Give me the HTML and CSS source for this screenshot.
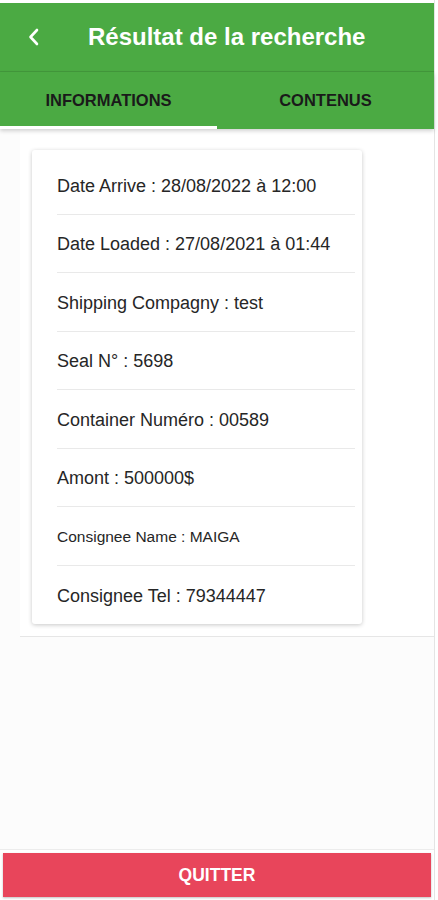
FILE: index.html
```html
<!DOCTYPE html>
<html lang="fr">
<head>
  <meta charset="UTF-8">
  <meta name="viewport" content="width=device-width, initial-scale=1.0">
  <title>Résultat de la recherche</title>
  <link rel="stylesheet" href="styles.css">
</head>
<body>

  <div class="app">
    <header class="topbar">
      <button class="back-btn" aria-label="Retour">
        <svg width="14" height="20" viewBox="0 0 14 20">
          <path d="M10 3 L3.5 10 L10 17" fill="none" stroke="#fff" stroke-width="2.6" stroke-linecap="round" stroke-linejoin="round"/>
        </svg>
      </button>
      <h1 class="title">Résultat de la recherche</h1>
    </header>

    <nav class="tabs">
      <div class="tab active">INFORMATIONS</div>
      <div class="tab">CONTENUS</div>
    </nav>

    <main class="main">
      <section class="content">
        <div class="card">
          <div class="row">Date Arrive : 28/08/2022 à 12:00</div>
          <div class="row">Date Loaded : 27/08/2021 à 01:44</div>
          <div class="row">Shipping Compagny : test</div>
          <div class="row">Seal N° : 5698</div>
          <div class="row">Container Numéro : 00589</div>
          <div class="row">Amont : 500000$</div>
          <div class="row small">Consignee Name : MAIGA</div>
          <div class="row">Consignee Tel : 79344447</div>
        </div>
      </section>
    </main>

    <footer class="footer">
      <button class="quit-btn">QUITTER</button>
    </footer>
  </div>

</body>
</html>
```

FILE: styles.css
```css
body {
  margin: 0;
  padding: 0;
  background-color: #FFF;
  font-family: "Liberation Sans", Arial, sans-serif;
  color: #222;
}

.app {
  width: 435px;
  height: 900px;
  padding-top: 3px;
  box-sizing: border-box;
  border-right: 1px solid #E4E4E4;
  display: flex;
  flex-direction: column;
}

.topbar {
  height: 68px;
  background-color: #4BAA43;
  border-bottom: 1px solid #43983C;
  display: flex;
  align-items: center;
}

.back-btn {
  background: none;
  border: none;
  padding: 0;
  margin-left: 27px;
  width: 14px;
  height: 20px;
  cursor: pointer;
}

.title {
  margin: 0 0 0 47px;
  font-size: 24px;
  font-weight: bold;
  color: #FFF;
}

.tabs {
  height: 57px;
  background-color: #4BAA43;
  display: flex;
  box-shadow: 0 2px 4px rgba(0, 0, 0, 0.18);
  position: relative;
}

.tab {
  flex: 1;
  display: flex;
  align-items: center;
  justify-content: center;
  font-size: 16.5px;
  font-weight: bold;
  color: #1A1A1A;
  border-bottom: 3px solid transparent;
  padding-top: 3px;
}

.tab.active {
  border-bottom-color: #FFF;
}

.main {
  flex: 1;
  background-color: #FCFCFC;
}

.content {
  background-color: #FFF;
  margin-left: 20px;
  padding: 21px 0 12px 12px;
  border-bottom: 1px solid #E6E6E6;
}

.card {
  width: 330px;
  background-color: #FFF;
  border-radius: 3px;
  padding-top: 6px;
  box-shadow: 0 1px 4px rgba(0, 0, 0, 0.22);
}

.row {
  height: 58.5px;
  margin-left: 25px;
  margin-right: 7px;
  border-bottom: 1px solid #E9E9E9;
  display: flex;
  align-items: center;
  padding-top: 3px;
  box-sizing: border-box;
  font-size: 18px;
  color: #262626;
}

.row:last-child {
  border-bottom: none;
}

.row.small {
  font-size: 15.5px;
}

.footer {
  border-top: 1px solid #ECECEC;
  padding: 3px 3px 3px 3px;
  background-color: #FFF;
}

.quit-btn {
  width: 100%;
  height: 44px;
  border: none;
  background-color: #E8455B;
  color: #FFF;
  font-family: "Liberation Sans", Arial, sans-serif;
  font-size: 17.5px;
  font-weight: bold;
  cursor: pointer;
  box-shadow: 0 1px 2px rgba(0, 0, 0, 0.25);
}
```
